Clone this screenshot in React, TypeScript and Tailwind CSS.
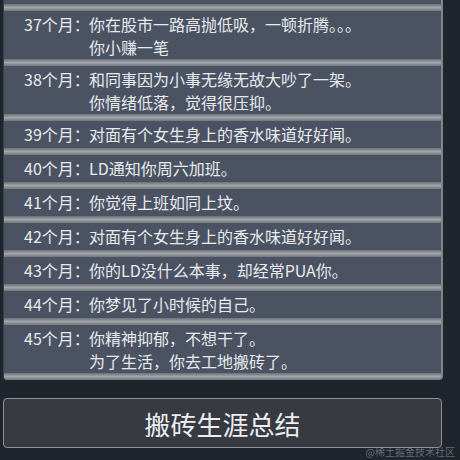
import React from 'react';

const events = [
    { month: 37, lines: ['你在股市一路高抛低吸，一顿折腾。。。', '你小赚一笔'] },
    { month: 38, lines: ['和同事因为小事无缘无故大吵了一架。', '你情绪低落，觉得很压抑。'] },
    { month: 39, lines: ['对面有个女生身上的香水味道好好闻。'] },
    { month: 40, lines: ['LD通知你周六加班。'] },
    { month: 41, lines: ['你觉得上班如同上坟。'] },
    { month: 42, lines: ['对面有个女生身上的香水味道好好闻。'] },
    { month: 43, lines: ['你的LD没什么本事，却经常PUA你。'] },
    { month: 44, lines: ['你梦见了小时候的自己。'] },
    { month: 45, lines: ['你精神抑郁，不想干了。', '为了生活，你去工地搬砖了。'] },
];

function Divider() {
    return <div className="h-[7px] bg-linear-to-b from-[#6c7077] via-[#a3a6ab] to-[#72767d]" />;
}

export default function App() {
    return (
        <div
            className="relative w-[460px] h-[460px] overflow-hidden bg-[#1f242d] text-[#e8eaee]"
            style={{ fontFamily: '"Noto Sans CJK SC", "Noto Sans", sans-serif' }}
        >
            <div className="ml-[3px] w-[440px] bg-[#4b5363] border-l border-l-[#3a404b] border-r-2 border-r-[#80858d] rounded-b-[4px] overflow-hidden">
                <div className="h-[4px]" />
                {events.map((e) => (
                    <div key={e.month}>
                        <Divider />
                        <div className={`flex pl-[20px] pt-[2px] text-[16px] leading-[23px] ${e.lines.length > 1 ? 'h-[48px]' : 'h-[27px]'}`}>
                            <span className="w-[65px] shrink-0 whitespace-nowrap">{e.month}个月：</span>
                            <div className="flex flex-col">
                                {e.lines.map((l) => (
                                    <span key={l} className="whitespace-nowrap">{l}</span>
                                ))}
                            </div>
                        </div>
                    </div>
                ))}
                <Divider />
            </div>

            <button className="mt-[18px] ml-[3px] w-[439px] h-[50px] flex items-center justify-center bg-[#373a41] border border-[#8e9198] rounded-[4px] text-[26px] text-[#eceef1]">
                搬砖生涯总结
            </button>

            <div className="absolute right-[5px] bottom-[1px] text-[10px] leading-[14px] text-[#8a8f97]/70 whitespace-nowrap">
                @稀土掘金技术社区
            </div>
        </div>
    );
}
